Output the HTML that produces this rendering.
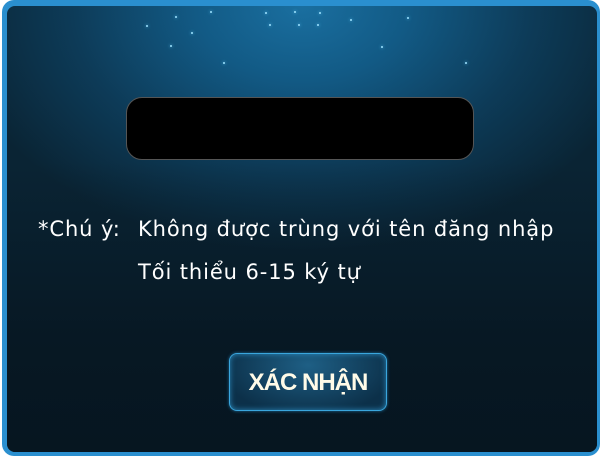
<!DOCTYPE html>
<html><head><meta charset="utf-8"><style>
html,body{margin:0;padding:0;width:602px;height:456px;overflow:hidden;background:#fff}
.frame{position:absolute;left:2px;top:0;width:598px;height:456px;border-radius:12px;background:#2a8fcf}
.panel{position:absolute;left:7px;top:6px;width:590px;height:446px;border-radius:8px;
background:radial-gradient(ellipse 60% 55% at 50% 0%,#1a6fa0 0%,#125a85 30%,#0d3b58 65%,#0a2434 100%);overflow:hidden}
.panel:after{content:"";position:absolute;left:0;top:0;right:0;bottom:0;background:linear-gradient(to bottom,rgba(0,0,0,0) 0%,rgba(0,0,0,0) 35%,rgba(6,20,30,.75) 75%,rgba(6,20,30,.9) 100%)}
.star{position:absolute;width:2px;height:2px;background:#9fe3ff;border-radius:1px;box-shadow:0 0 3px #5cc8ff;z-index:2}
.input{position:absolute;left:126px;top:97px;width:348px;height:63px;background:#000;border-radius:16px;border:1px solid #555;box-sizing:border-box;z-index:3}
.t{position:absolute;color:#fff;font:21px "DejaVu Sans",sans-serif;letter-spacing:0.9px;z-index:3;white-space:nowrap}
.btn{position:absolute;left:229px;top:353px;width:158px;height:58px;box-sizing:border-box;border:1px solid #3aa6dd;border-radius:8px;
background:radial-gradient(ellipse at 50% 20%,#1e5f85,#0c3049 80%);box-shadow:inset 0 0 6px #2a88bb, 0 0 3px #1c6d9c;z-index:3;
color:#fffbe8;font:bold 24px "Liberation Sans",sans-serif;letter-spacing:-1px;text-align:center;line-height:58px}
</style></head><body>
<div class="frame"></div>
<div class="panel">
<div class="star" style="left:139px;top:19px"></div>
<div class="star" style="left:168px;top:10px"></div>
<div class="star" style="left:184px;top:26px"></div>
<div class="star" style="left:163px;top:39px"></div>
<div class="star" style="left:203px;top:5px"></div>
<div class="star" style="left:291px;top:18px"></div>
<div class="star" style="left:310px;top:18px"></div>
<div class="star" style="left:287px;top:5px"></div>
<div class="star" style="left:312px;top:6px"></div>
<div class="star" style="left:343px;top:13px"></div>
<div class="star" style="left:400px;top:11px"></div>
<div class="star" style="left:258px;top:6px"></div>
<div class="star" style="left:458px;top:56px"></div>
<div class="star" style="left:374px;top:40px"></div>
<div class="star" style="left:216px;top:56px"></div>
<div class="star" style="left:262px;top:18px"></div>
</div>
<div class="input"></div>
<div class="t" style="left:38px;top:217px">*Chú ý:</div>
<div class="t" style="left:138px;top:217px">Không được trùng với tên đăng nhập</div>
<div class="t" style="left:138px;top:260px">Tối thiểu 6-15 ký tự</div>
<div class="btn">XÁC NHẬN</div>
</body></html>
